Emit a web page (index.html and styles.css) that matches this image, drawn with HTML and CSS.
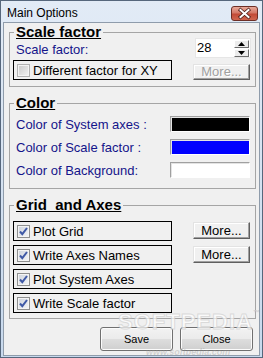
FILE: index.html
```html
<!DOCTYPE html>
<html lang="en">
  <head>
    <meta charset="UTF-8" />
    <title>Main Options</title>
    <link rel="stylesheet" href="styles.css">
  </head>
  <body>
    <div class="window">
      <div class="titlebar">
        <span class="title">Main Options</span>
        <button class="close-btn" aria-label="Close">
          <svg width="27" height="15" viewBox="0 0 27 15">
            <path d="M9.5 4 L17.5 11 M17.5 4 L9.5 11" stroke="#4b1d17" stroke-width="3.6" stroke-linecap="square" fill="none"/>
            <path d="M9.5 4 L17.5 11 M17.5 4 L9.5 11" stroke="#fff" stroke-width="2" stroke-linecap="square" fill="none"/>
          </svg>
        </button>
      </div>

      <div class="client">
        <!-- scale factor -->
        <div class="group">
          <div class="group-title">Scale factor</div>
          <div class="row">
            <span class="label label-scale">Scale factor:</span>
            <div class="spinner">
              <span class="spin-value">28</span>
              <div class="spin-buttons">
                <span class="spin-btn"><svg width="7" height="4" viewBox="0 0 7 4"><path d="M0 4 L3.5 0 L7 4 Z" fill="#000"/></svg></span>
                <span class="spin-btn"><svg width="7" height="4" viewBox="0 0 7 4"><path d="M0 0 L3.5 4 L7 0 Z" fill="#000"/></svg></span>
              </div>
            </div>
          </div>
          <div class="row row-xy">
            <div class="check-row">
              <span class="check disabled"></span>
              <span>Different factor for XY</span>
            </div>
            <button class="btn-more" disabled>More...</button>
          </div>
        </div>

        <!-- colors -->
        <div class="group">
          <div class="group-title">Color</div>
          <div class="color-list">
            <div class="color-row">
              <span class="label">Color of System axes :</span>
              <span class="swatch" style="background: #000000"></span>
            </div>
            <div class="color-row">
              <span class="label">Color of Scale factor :</span>
              <span class="swatch" style="background: #0000ff"></span>
            </div>
            <div class="color-row">
              <span class="label">Color of Background:</span>
              <span class="swatch" style="background: #ffffff"></span>
            </div>
          </div>
        </div>

        <!-- grid and axes -->
        <div class="group group-grid">
          <div class="group-title">Grid&nbsp; and Axes</div>
          <div class="option-list">
            <div class="row">
              <div class="check-row"><span class="check checked"></span><span>Plot&nbsp;Grid</span></div>
              <button class="btn-more">More...</button>
            </div>
            <div class="row">
              <div class="check-row"><span class="check checked"></span><span>Write Axes Names</span></div>
              <button class="btn-more">More...</button>
            </div>
            <div class="row">
              <div class="check-row"><span class="check checked"></span><span>Plot System Axes</span></div>
            </div>
            <div class="row">
              <div class="check-row"><span class="check checked"></span><span>Write Scale factor</span></div>
            </div>
          </div>
        </div>

        <div class="footer">
          <button class="btn">Save</button>
          <button class="btn">Close</button>
        </div>

        <div class="watermark">SOFTPEDIA<sup>™</sup></div>
        <div class="watermark-url">www.softpedia.com</div>
      </div>
    </div>
  </body>
</html>
```

FILE: styles.css
```css
body {
  margin: 0;
  font-family: "Liberation Sans", Arial, sans-serif;
  background: #fff;
}
.window {
  width: 263px;
  height: 358px;
  box-sizing: border-box;
  border: 1px solid #56677c;
  background: linear-gradient(#e2ebf6, #c8d9ed);
  padding: 0 2px 1px;
  display: flex;
  flex-direction: column;
}
.titlebar {
  height: 21px;
  display: flex;
  justify-content: space-between;
  align-items: flex-start;
  flex-shrink: 0;
}
.title {
  font-size: 12px;
  line-height: 15px;
  margin: 5px 0 0 4px;
  color: #000;
}
.close-btn {
  width: 27px;
  height: 15px;
  margin: 5px 2px 0 0;
  padding: 0;
  border: 1px solid #6d2f26;
  border-radius: 3px;
  background: linear-gradient(#e7a99a 0%, #d47866 45%, #c24a36 55%, #d0664f 100%);
  display: flex;
  align-items: center;
  justify-content: center;
  box-sizing: border-box;
}
.close-btn svg {
  display: block;
  flex-shrink: 0;
}
.client {
  flex: 1;
  position: relative;
  border: 1px solid #8f9cab;
  background: #f0f0f0;
  overflow: hidden;
}
.group {
  margin: 9px 3px 0 5px;
  border: 1px solid #a5a5a5;
  padding: 0 4px 6px 3px;
}
.group + .group {
  margin-top: 16px;
}
.group-title {
  width: fit-content;
  margin: -10px 0 -3px 1px;
  padding: 0 2px;
  background: #f0f0f0;
  font-size: 15px;
  font-weight: bold;
  line-height: 17px;
  text-decoration: underline;
  color: #000;
}
.row {
  display: flex;
  justify-content: space-between;
  align-items: flex-start;
}
.label {
  font-size: 13px;
  line-height: 15px;
  color: #14148a;
}
.label-scale {
  margin: 5px 0 0 3px;
}
.spinner {
  width: 56px;
  height: 20px;
  margin-top: 1px;
  box-sizing: border-box;
  background: #fff;
  border: 1px solid #e6e6e6;
  display: flex;
  justify-content: space-between;
  align-items: center;
}
.spin-value {
  font-size: 13px;
  line-height: 15px;
  align-self: flex-start;
  padding: 1px 0 0 1px;
}
.spin-buttons {
  width: 15px;
  height: 17px;
  margin-right: 1px;
  display: flex;
  flex-direction: column;
  gap: 1px;
}
.spin-btn {
  flex: 1;
  box-sizing: border-box;
  background: #ececec;
  border: 1px solid;
  border-color: #fff #6d6d6d #6d6d6d #fff;
  display: flex;
  align-items: center;
  justify-content: center;
}
.spin-btn svg {
  display: block;
}
.row-xy {
  margin-top: 2px;
}
.check-row {
  width: 159px;
  height: 20px;
  box-sizing: border-box;
  border: 1px solid #000;
  display: flex;
  align-items: center;
  gap: 3px;
  padding-left: 3px;
  font-size: 13px;
  color: #000;
  white-space: nowrap;
}
.check {
  width: 13px;
  height: 13px;
  box-sizing: border-box;
  flex-shrink: 0;
  border: 1px solid #8e8f8f;
  background: linear-gradient(135deg, #cfd3da, #f7f8f9);
  box-shadow: inset 0 0 0 1px #f4f4f4;
}
.check.disabled {
  border-color: #b1b1b1;
  background: linear-gradient(135deg, #c9c9c9, #f3f3f3);
}
.check.checked {
  background:
    url("data:image/svg+xml,%3Csvg xmlns='http://www.w3.org/2000/svg' width='11' height='11'%3E%3Cpath d='M2 5.5 L4.3 8.2 L9 2' stroke='%233f59a6' stroke-width='2' fill='none'/%3E%3C/svg%3E") center / 11px 11px no-repeat,
    linear-gradient(135deg, #cdd3dd, #f5f6f8);
}
.btn-more {
  width: 57px;
  height: 17px;
  margin: 1px 1px 0 0;
  padding: 0;
  box-sizing: border-box;
  background: #f0f0f0;
  border: 1px solid;
  border-color: #e3e3e3 #5f5f5f #5f5f5f #e3e3e3;
  box-shadow: inset -1px -1px #a0a0a0, inset 1px 1px #fff;
  font-family: "Liberation Sans", Arial, sans-serif;
  font-size: 13px;
  line-height: 14px;
  color: #000;
}
.row-xy .btn-more {
  margin-top: 4px;
  height: 16px;
}
.btn-more:disabled {
  color: #a0a0a0;
  text-shadow: 1px 1px #fff;
}
.color-list {
  margin: 8px 0 4px;
  display: flex;
  flex-direction: column;
  gap: 7px;
}
.color-row {
  display: flex;
  justify-content: space-between;
  align-items: center;
  padding-left: 3px;
}
.swatch {
  width: 80px;
  height: 16px;
  margin-right: 1px;
  box-sizing: border-box;
  border: 1px solid;
  border-color: #a0a0a0 #fff #fff #a0a0a0;
  box-shadow: inset 1px 1px #e3e3e3;
}
.group-grid {
  padding-bottom: 5px;
}
.option-list {
  margin-top: 11px;
  display: flex;
  flex-direction: column;
  gap: 4px;
}
.footer {
  margin: 8px 6px 0 0;
  display: flex;
  justify-content: flex-end;
  gap: 7px;
}
.btn {
  width: 73px;
  height: 24px;
  padding: 0;
  border: 1px solid #707070;
  border-radius: 3px;
  background: linear-gradient(#f2f2f2 0%, #ebebeb 48%, #dddddd 52%, #cfcfcf 100%);
  box-shadow: inset 0 0 0 1px #fbfbfb;
  font-family: "Liberation Sans", Arial, sans-serif;
  font-size: 11px;
  color: #000;
}
.watermark {
  position: absolute;
  left: 114px;
  top: 286px;
  font-size: 22px;
  font-weight: bold;
  letter-spacing: 1px;
  color: rgba(255, 255, 255, 0.7);
  -webkit-text-stroke: 1px rgba(200, 200, 200, 0.6);
  pointer-events: none;
}
.watermark sup {
  font-size: 7px;
  -webkit-text-stroke: 0;
  color: #d0d0d0;
  vertical-align: top;
}
.watermark-url {
  position: absolute;
  left: 142px;
  top: 324px;
  font-size: 9px;
  line-height: 10px;
  font-weight: bold;
  font-style: italic;
  color: rgba(150, 150, 150, 0.35);
  pointer-events: none;
}
```
